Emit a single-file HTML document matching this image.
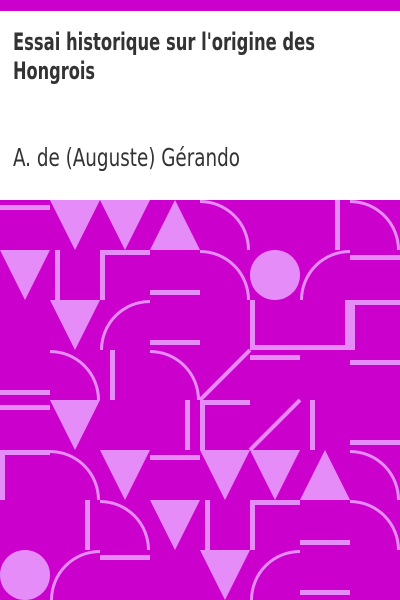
<!DOCTYPE html>
<html><head><meta charset="utf-8"><style>
html,body{margin:0;padding:0;width:400px;height:600px;overflow:hidden;background:#fff}
svg{display:block}
</style></head><body>
<svg width="400" height="600" viewBox="0 0 400 600" xmlns="http://www.w3.org/2000/svg">
<rect x="0" y="0" width="400" height="11" fill="#cc00cc"/>
<g font-family="'DejaVu Sans Condensed','DejaVu Sans','Liberation Sans',sans-serif" fill="#333">
<text x="13" y="50" font-size="24" font-weight="bold" textLength="302" lengthAdjust="spacingAndGlyphs">Essai historique sur l'origine des</text>
<text x="13" y="79" font-size="24" font-weight="bold" textLength="82" lengthAdjust="spacingAndGlyphs">Hongrois</text>
<text x="13" y="166" font-size="25" textLength="227" lengthAdjust="spacingAndGlyphs">A. de (Auguste) Gérando</text>
</g>
<rect x="0" y="200" width="400" height="400" fill="#cc00cc"/>
<g fill="#e68cf8">
<!-- triangles -->
<polygon points="50,200 100,200 75,250"/>
<polygon points="100,200 150,200 125,250"/>
<polygon points="150,250 200,250 175,200"/>
<polygon points="0,250 50,250 25,300"/>
<polygon points="50,300 100,300 75,350"/>
<polygon points="50,400 100,400 75,450"/>
<polygon points="100,450 150,450 125,500"/>
<polygon points="150,500 200,500 175,550"/>
<polygon points="200,450 250,450 225,500"/>
<polygon points="250,450 300,450 275,500"/>
<polygon points="300,500 350,500 325,450"/>
<polygon points="200,550 250,550 225,600"/>
<!-- circles -->
<circle cx="275" cy="275" r="25"/>
<circle cx="25" cy="575" r="25"/>
<!-- bars -->
<rect x="0" y="205" width="50" height="5"/>
<rect x="55" y="250" width="5" height="50"/>
<rect x="100" y="250" width="50" height="5"/>
<rect x="100" y="250" width="5" height="50"/>
<rect x="150" y="290" width="50" height="5"/>
<rect x="150" y="340" width="50" height="5"/>
<rect x="110" y="350" width="5" height="50"/>
<rect x="0" y="390" width="50" height="5"/>
<rect x="0" y="405" width="50" height="5"/>
<rect x="185" y="400" width="5" height="50"/>
<rect x="0" y="450" width="50" height="5"/>
<rect x="0" y="450" width="5" height="50"/>
<rect x="150" y="455" width="50" height="5"/>
<rect x="85" y="500" width="5" height="50"/>
<rect x="100" y="555" width="50" height="5"/>
<rect x="335" y="200" width="5" height="50"/>
<rect x="350" y="255" width="50" height="5"/>
<rect x="250" y="300" width="5" height="50"/>
<rect x="250" y="345" width="105" height="5"/>
<rect x="345" y="300" width="10" height="50"/>
<rect x="345" y="300" width="55" height="5"/>
<rect x="250" y="355" width="50" height="5"/>
<rect x="350" y="360" width="50" height="5"/>
<rect x="200" y="400" width="50" height="5"/>
<rect x="200" y="400" width="5" height="50"/>
<rect x="310" y="400" width="5" height="50"/>
<rect x="350" y="440" width="50" height="5"/>
<rect x="205" y="500" width="5" height="50"/>
<rect x="250" y="500" width="50" height="5"/>
<rect x="250" y="500" width="5" height="50"/>
<rect x="300" y="540" width="50" height="5"/>
<rect x="300" y="590" width="50" height="5"/>
</g>
<g fill="none" stroke="#e68cf8" stroke-width="3">
<path d="M101.5,350 A48.5,48.5 0 0 1 150,301.5"/>
<path d="M50,351.5 A48.5,48.5 0 0 1 98.5,400"/>
<path d="M150,351.5 A48.5,48.5 0 0 1 198.5,400"/>
<path d="M200,201.5 A48.5,48.5 0 0 1 248.5,250"/>
<path d="M350,201.5 A48.5,48.5 0 0 1 398.5,250"/>
<path d="M200,251.5 A48.5,48.5 0 0 1 248.5,300"/>
<path d="M301.5,300 A48.5,48.5 0 0 1 350,251.5"/>
<path d="M50,451.5 A48.5,48.5 0 0 1 98.5,500"/>
<path d="M100,501.5 A48.5,48.5 0 0 1 148.5,550"/>
<path d="M51.5,600 A48.5,48.5 0 0 1 100,551.5"/>
<path d="M350,451.5 A48.5,48.5 0 0 1 398.5,500"/>
<path d="M350,501.5 A48.5,48.5 0 0 1 398.5,550"/>
<path d="M251.5,600 A48.5,48.5 0 0 1 300,551.5"/>
</g>
<g stroke="#e68cf8" stroke-width="4">
<line x1="250" y1="350" x2="200" y2="400"/>
<line x1="300" y1="400" x2="250" y2="450"/>
</g>
</svg>
</body></html>
